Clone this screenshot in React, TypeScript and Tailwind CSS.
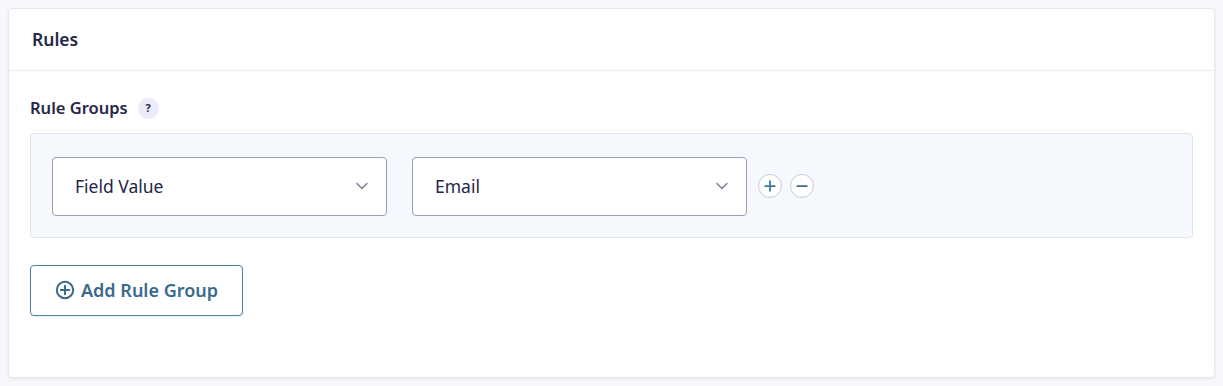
import { ChevronDown } from "lucide-react"

const Select = ({ value }: { value: string }) => (
    <div className="flex h-[59px] w-[335px] items-center justify-between rounded-[4px] border border-[#9b9db6] bg-white pl-[22px] pr-[14px] text-[17.5px] text-[#242748]">
        <span>{value}</span>
        <ChevronDown className="h-[20px] w-[20px] text-[#7d809b]" strokeWidth={1.8} />
    </div>
)

const RoundButton = ({ minus }: { minus?: boolean }) => (
    <button
        type="button"
        className="flex h-[24px] w-[24px] items-center justify-center rounded-full border border-[#c7c9da] bg-white"
    >
        <svg viewBox="0 0 16 16" className="h-[14px] w-[14px]" aria-hidden="true">
            <path d="M2.5 8h11" stroke={minus ? "#3d6a8c" : "#3b79a4"} strokeWidth="2" strokeLinecap="round" />
            {!minus && <path d="M8 2.5v11" stroke="#3b79a4" strokeWidth="2" strokeLinecap="round" />}
        </svg>
    </button>
)

export default function App() {
    return (
        <div className="min-h-[386px] bg-[#f6f8fc] p-2" style={{ fontFamily: '"Noto Sans", "Open Sans", sans-serif' }}>
            <div className="h-[370px] rounded-[4px] border border-[#e6e8f0] bg-white shadow-[0_1px_3px_rgba(28,31,63,0.08)]">
                <div className="flex h-[62px] items-center border-b border-[#ebedf2] px-[23px]">
                    <h2 className="text-[17.5px] font-semibold text-[#242748]">Rules</h2>
                </div>
                <div className="px-[21px] pt-[25px]">
                    <div className="flex items-center gap-[10px]">
                        <span className="text-[16.5px] font-semibold text-[#242748]">Rule Groups</span>
                        <span className="flex h-[21px] w-[21px] items-center justify-center rounded-full bg-[#ecebfa] text-[11px] font-bold text-[#242748]">?</span>
                    </div>
                    <div className="mt-[12px] flex h-[105px] items-center gap-[25px] rounded-[4px] border border-[#dfe3ec] bg-[#f5f8fc] px-[21px] pt-[2px]">
                        <Select value="Field Value" />
                        <Select value="Email" />
                        <div className="-ml-[14px] flex items-center gap-[8px]">
                            <RoundButton />
                            <RoundButton minus />
                        </div>
                    </div>
                    <button
                        type="button"
                        className="mt-[27px] flex h-[51px] items-center gap-[6px] rounded-[4px] border border-[#4b7fa6] bg-white pl-[24px] pr-[24px] text-[18px] font-semibold text-[#3a6a8c] shadow-[0_1px_2px_rgba(0,0,0,0.08)]"
                    >
                        <svg viewBox="0 0 20 20" className="h-[20px] w-[20px]" aria-hidden="true">
                            <circle cx="10" cy="10" r="8.2" fill="none" stroke="#3a6a8c" strokeWidth="2" />
                            <path d="M10 5.8v8.4M5.8 10h8.4" stroke="#3a6a8c" strokeWidth="2" strokeLinecap="round" />
                        </svg>
                        Add Rule Group
                    </button>
                </div>
            </div>
        </div>
    )
}
